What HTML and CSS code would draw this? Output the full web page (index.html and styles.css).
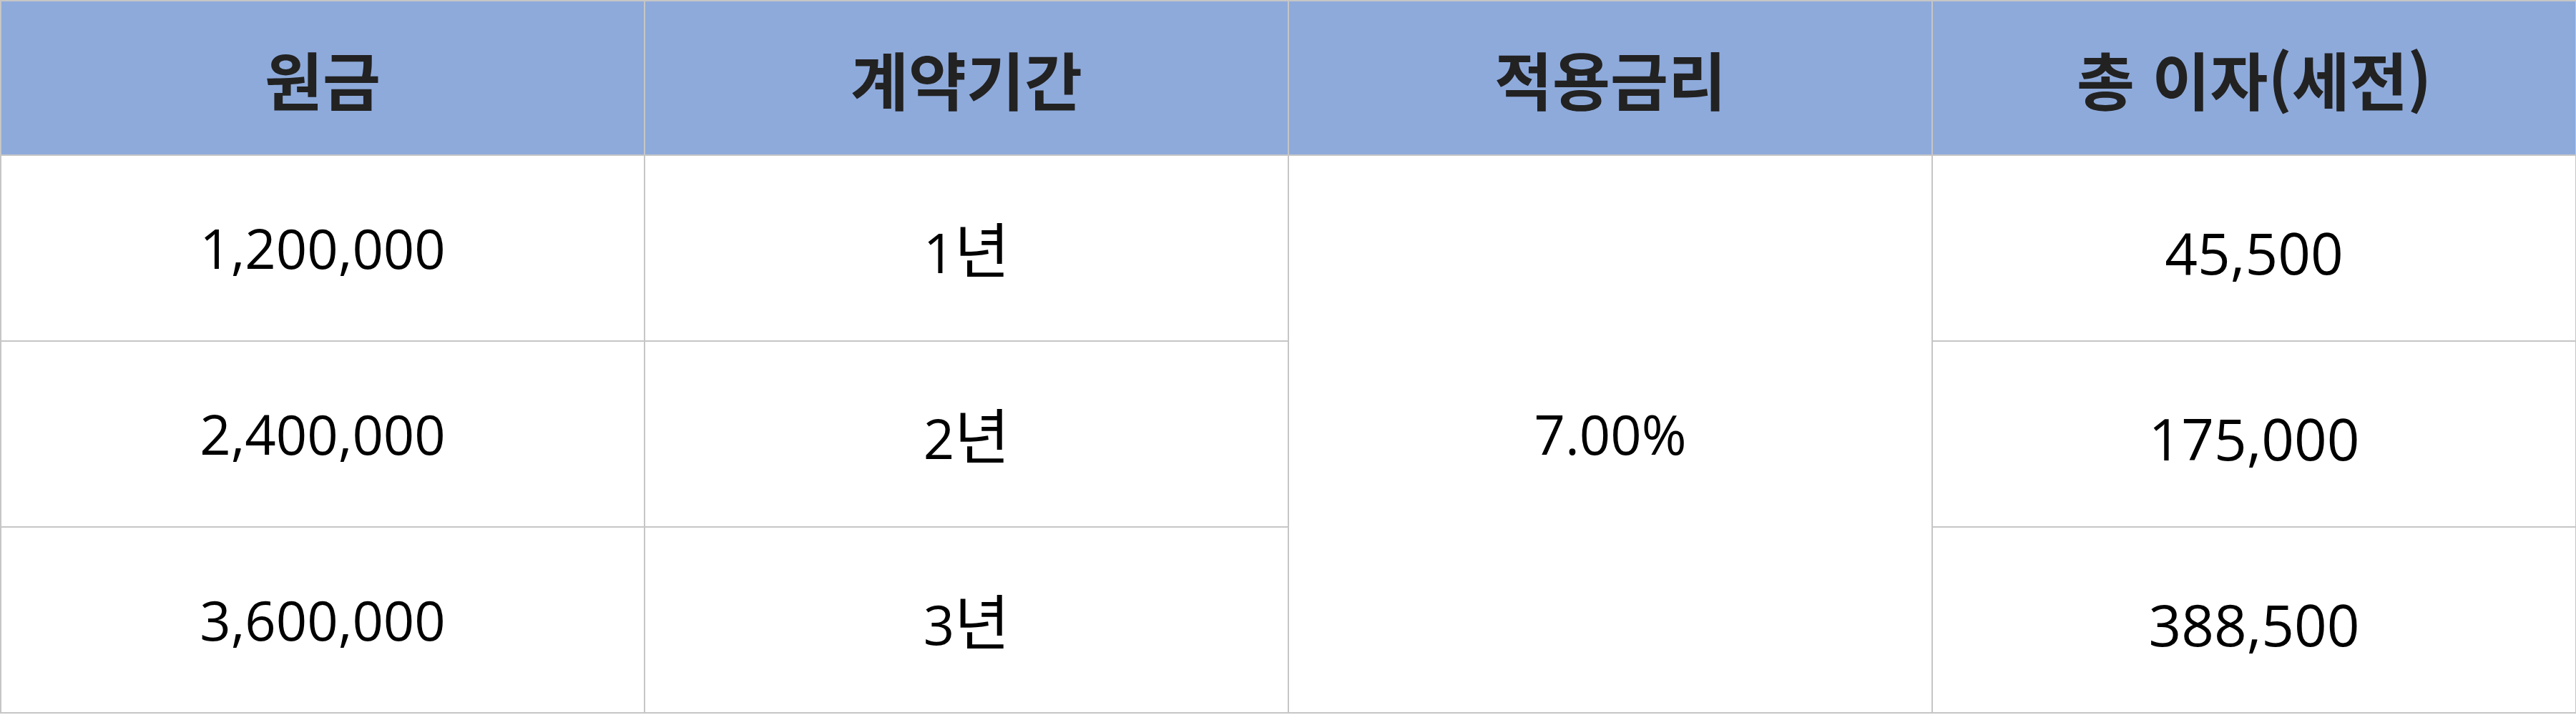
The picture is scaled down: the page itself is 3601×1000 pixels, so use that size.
FILE: index.html
```html
<!DOCTYPE html>
<html lang="ko">
<head>
<meta charset="utf-8">
<title>이자 표</title>
<link rel="stylesheet" href="styles.css">
</head>
<body>
<table class="rate-table">
  <thead>
    <tr class="head-row">
      <th>원금</th>
      <th>계약기간</th>
      <th>적용금리</th>
      <th>총 이자(세전)</th>
    </tr>
  </thead>
  <tbody>
    <tr class="body-row">
      <td>1,200,000</td>
      <td>1<span class="unit">년</span></td>
      <td rowspan="3" class="rate">7.00%</td>
      <td class="interest">45,500</td>
    </tr>
    <tr class="body-row">
      <td>2,400,000</td>
      <td>2<span class="unit">년</span></td>
      <td class="interest">175,000</td>
    </tr>
    <tr class="body-row">
      <td>3,600,000</td>
      <td>3<span class="unit">년</span></td>
      <td class="interest">388,500</td>
    </tr>
  </tbody>
</table>
</body>
</html>
```

FILE: styles.css
```css
html, body {
  margin: 0;
  padding: 0;
  background: #ffffff;
}

.rate-table {
  width: 3600px;
  border-collapse: collapse;
  table-layout: fixed;
  font-family: "Open Sans", "Noto Sans CJK KR", sans-serif;
}

.rate-table th,
.rate-table td {
  border: 2px solid #c6c6c6;
  text-align: center;
  vertical-align: middle;
  padding: 0;
  width: 898px;
}

.head-row {
  height: 216px;
}

.head-row th {
  background: #8eaadb;
  color: #222222;
  font-family: "Noto Sans CJK KR", sans-serif;
  font-weight: 700;
  font-size: 88px;
  line-height: 1;
}

.body-row {
  height: 260px;
}

.body-row td {
  color: #000000;
  font-size: 76px;
  line-height: 1;
}

.unit {
  font-family: "Noto Sans CJK KR", sans-serif;
  font-size: 84px;
  font-weight: 400;
}

.rate-table td.interest {
  font-size: 80px;
  padding-top: 12px;
}
```
